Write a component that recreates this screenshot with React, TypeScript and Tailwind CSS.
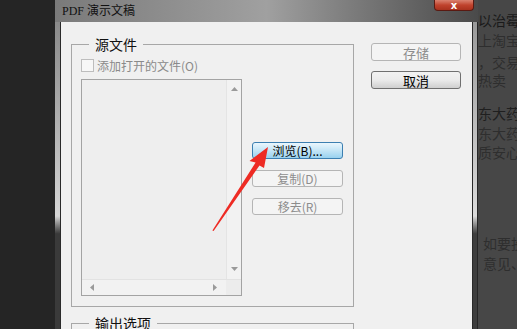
const cjk = "font-['SimSun','Noto_Sans_CJK_SC',sans-serif]";

type BtnProps = { label: string; disabled?: boolean; hot?: boolean; className?: string };

const Btn = ({ label, disabled, hot, className = "" }: BtnProps) => {
    const skin = hot
        ? "border-[#3c7fb1] bg-gradient-to-b from-[#eaf6fd] via-[#c4e5f6] to-[#98d1ef] text-black"
        : disabled
        ? "border-[#b5b5b5] bg-[#f4f4f4] text-[#8d8d8d]"
        : "border-[#707070] bg-gradient-to-b from-[#f2f2f2] via-[#ebebeb] to-[#cfcfcf] text-black";
    return (
        <div
            className={`flex items-center justify-center rounded-[3px] border text-[12px] leading-none ${skin} ${className}`}
        >
            {label}
        </div>
    );
};

const Tri = ({ dir }: { dir: "up" | "down" | "left" | "right" }) => {
    const pts = {
        up: "0,5 3.5,1 7,5",
        down: "0,1 3.5,5 7,1",
        left: "5,0 1,3.5 5,7",
        right: "1,0 5,3.5 1,7",
    }[dir];
    return (
        <svg width="7" height="7" viewBox="0 0 7 7">
            <polygon points={pts} fill="#9a9a9a" />
        </svg>
    );
};

export default function App() {
    return (
        <div className={`relative flex w-[517px] h-[329px] overflow-hidden bg-[#262626] ${cjk}`}>
            {/* background behind the dialog */}
            <div className="w-[55px] shrink-0 bg-[#252525]" />

            {/* dialog window */}
            <div className="flex w-[423px] shrink-0 flex-col">
                <div className="flex h-[22px] shrink-0 items-start bg-gradient-to-r from-[#7a7a7a] via-[#a0a0a0] to-[#4a4a4a]">
                    <div className="pl-[7px] pt-[4px] text-[12px] leading-[14px] text-[#111] font-['Liberation_Serif','SimSun','Noto_Sans_CJK_SC',serif]">
                        PDF 演示文稿
                    </div>
                    <div className="ml-auto mr-[4px] flex h-[11px] w-[40px] items-end justify-center rounded-b-[4px] border border-t-0 border-[#5a1a12] bg-gradient-to-b from-[#d9816f] via-[#c0432d] to-[#a8311d]">
                        <span className="text-[10px] font-bold leading-[9px] text-white font-['DejaVu_Sans',sans-serif]">x</span>
                    </div>
                </div>

                <div className="flex flex-1">
                    <div className="w-[5px] shrink-0 bg-gradient-to-b from-[#8a8a8a] via-[#d6d6d6] via-55% to-[#3a3a3a] to-60%" />
                    <div className="flex w-[413px] shrink-0 border-l border-r border-[#2a2a2a] bg-[#f0f0f0]">
                        {/* left column with group boxes */}
                        <div className="ml-[10px] w-[283px] shrink-0 pt-[14px]">
                            <fieldset className="h-[271px] border border-[#a7a7a7] pl-[9px]">
                                <legend className="ml-[8px] px-[6px] text-[14px] leading-[16px] text-[#111]">源文件</legend>
                                <div className="mt-[7px] flex h-[13px] items-center">
                                    <div className="h-[13px] w-[13px] border border-[#bdbdbd] bg-[#f7f7f7]" />
                                    <span className="ml-[3px] text-[12px] leading-none text-[#8a8a8a]">添加打开的文件(O)</span>
                                </div>
                                <div className="mt-[7px] flex">
                                    {/* file list */}
                                    <div className="flex h-[217px] w-[161px] flex-col border border-[#a3a3a3] bg-[#eeeeee]">
                                        <div className="flex flex-1">
                                            <div className="flex-1" />
                                            <div className="flex w-[15px] flex-col items-center justify-between border-l border-[#e4e4e4] bg-[#f2f2f2] py-[6px]">
                                                <Tri dir="up" />
                                                <Tri dir="down" />
                                            </div>
                                        </div>
                                        <div className="flex h-[16px] border-t border-[#e2e2e2]">
                                            <div className="flex flex-1 items-center justify-between bg-[#f2f2f2] px-[7px]">
                                                <Tri dir="left" />
                                                <Tri dir="right" />
                                            </div>
                                            <div className="w-[15px] bg-[#ececec]" />
                                        </div>
                                    </div>
                                    {/* action buttons */}
                                    <div className="ml-[10px] flex w-[91px] flex-col pt-[63px]">
                                        <Btn label="浏览(B)..." hot className="h-[17px]" />
                                        <Btn label="复制(D)" disabled className="mt-[11px] h-[17px]" />
                                        <Btn label="移去(R)" disabled className="mt-[11px] h-[17px]" />
                                    </div>
                                </div>
                            </fieldset>
                            <fieldset className="mt-[8px] h-[60px] border border-[#a7a7a7]">
                                <legend className="ml-[17px] px-[6px] text-[14px] leading-[16px] text-[#111]">输出选项</legend>
                            </fieldset>
                        </div>

                        {/* right column */}
                        <div className="ml-[17px] flex w-[90px] shrink-0 flex-col pt-[21px]">
                            <Btn label="存储" disabled className="h-[18px] text-[13px]" />
                            <Btn label="取消" className="mt-[10px] h-[18px] text-[13px]" />
                        </div>
                    </div>
                    <div className="w-[4px] shrink-0 bg-gradient-to-b from-[#9a9a9a] via-[#dcdcdc] via-55% to-[#3e3e3e] to-60%" />
                </div>
            </div>

            {/* web page behind the dialog */}
            <div className="flex flex-1 flex-col overflow-hidden whitespace-nowrap bg-[#474747] text-[14px] leading-[18px] text-[#2e2e2e]">
                <div className="mt-[11px] h-[18px] text-[#1a1a1a]">以治霉</div>
                <div className="mt-[2px] h-[18px]">上淘宝</div>
                <div className="mt-[4px] h-[18px]">，交易</div>
                <div className="h-[18px]">热卖</div>
                <div className="mt-[15px] h-[18px] text-[#1f1f1f]">东大药</div>
                <div className="mt-[2px] h-[18px]">东大药</div>
                <div className="mt-[1px] h-[18px]">质安心</div>
                <div className="mt-[73px] h-[18px] pl-[5px]">如要投</div>
                <div className="mt-[2px] h-[18px] pl-[5px]">意见、</div>
            </div>

            {/* red annotation arrow */}
            <svg className="pointer-events-none absolute left-0 top-0" width="517" height="329" viewBox="0 0 517 329">
                <polygon
                    points="268,147 264,168 259.5,165.5 213.6,231 212.4,230.4 255.6,162.6 249.5,161"
                    fill="#ee2b24"
                />
            </svg>
        </div>
    );
}
